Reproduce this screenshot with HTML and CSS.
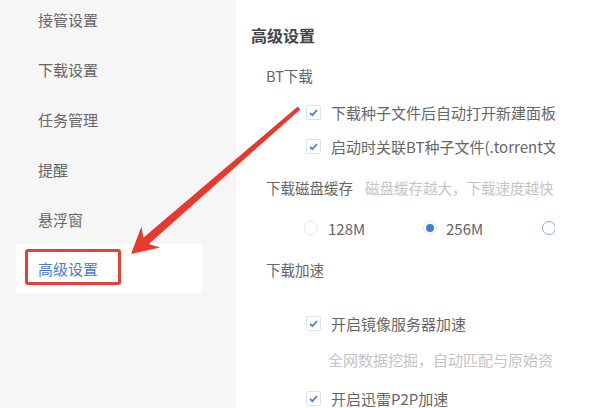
FILE: index.html
```html
<!DOCTYPE html>
<html>
<head>
	<meta charset="utf-8">
	<title>高级设置</title>
	<link rel="stylesheet" href="styles.css">
</head>
<body>
	<div class="window">
		<div class="side-menu">
			<div class="menu-item">接管设置</div>
			<div class="menu-item">下载设置</div>
			<div class="menu-item">任务管理</div>
			<div class="menu-item">提醒</div>
			<div class="menu-item">悬浮窗</div>
			<div class="menu-item active">高级设置<span class="mark-box"></span></div>
		</div>

		<div class="settings-main">
			<div class="settings-title">高级设置</div>

			<div class="group-label">BT下载</div>
			<div class="check-row mt9"><span class="check"><svg viewBox="0 0 13 13" width="13" height="13"><polyline points="3,6.8 5.4,9.2 10,4" /></svg></span>下载种子文件后自动打开新建面板</div>
			<div class="check-row"><span class="check"><svg viewBox="0 0 13 13" width="13" height="13"><polyline points="3,6.8 5.4,9.2 10,4" /></svg></span>启动时关联BT种子文件(.torrent文</div>

			<div class="group-label mt15">下载磁盘缓存<span class="hint-inline">磁盘缓存越大，下载速度越快</span></div>
			<div class="radio-row">
				<div class="radio-opt"><span class="radio"></span>128M</div>
				<div class="radio-opt"><span class="radio checked"></span>256M</div>
				<div class="radio-opt last"><span class="radio next"></span></div>
			</div>

			<div class="group-label mt17">下载加速</div>
			<div class="check-row mt26"><span class="check"><svg viewBox="0 0 13 13" width="13" height="13"><polyline points="3,6.8 5.4,9.2 10,4" /></svg></span>开启镜像服务器加速</div>
			<div class="hint-row">全网数据挖掘，自动匹配与原始资</div>
			<div class="check-row mt11"><span class="check"><svg viewBox="0 0 13 13" width="13" height="13"><polyline points="3,6.8 5.4,9.2 10,4" /></svg></span>开启迅雷P2P加速</div>
		</div>

		<div class="right-blank"></div>

		<svg class="pointer-arrow" width="612" height="408" viewBox="0 0 612 408">
			<polygon points="297.7,106.5 143.3,237.8 141.5,226.4 131,254 160.2,247.5 148.8,244.0 300.3,109.5" />
		</svg>
	</div>
</body>
</html>
```

FILE: styles.css
```css
body{
	margin: 0;
	font-family: "Noto Sans CJK SC", "Noto Sans", sans-serif;
}
.window{
	position: relative;
	display: flex;
	width: 612px;
	height: 408px;
	overflow: hidden;
	background-color: #fff;
}
.side-menu{
	width: 236px;
	flex-shrink: 0;
	background-color: #f6f6f6;
	padding-left: 16px;
	box-sizing: border-box;
}
.menu-item{
	position: relative;
	width: 186px;
	height: 50px;
	display: flex;
	align-items: center;
	padding-left: 22px;
	box-sizing: border-box;
	font-size: 15px;
	color: #666;
	border-radius: 4px;
}
.menu-item:first-child{
	margin-top: -6px;
}
.menu-item.active{
	background-color: #fff;
	color: #4a7ccc;
	height: 49px;
}
.mark-box{
	position: absolute;
	left: 9px;
	top: 5px;
	width: 96px;
	height: 36px;
	border: 3px solid #e0433a;
	border-radius: 3px;
	box-sizing: border-box;
}
.settings-main{
	width: 319px;
	flex-shrink: 0;
	overflow: hidden;
	padding: 23px 0 0 15px;
	box-sizing: border-box;
	white-space: nowrap;
	color: #666;
}
.right-blank{
	flex: 1;
}
.settings-title{
	height: 24px;
	line-height: 24px;
	font-size: 16px;
	font-weight: bold;
	color: #444;
}
.group-label{
	margin-top: 19px;
	padding-left: 15px;
	height: 20px;
	line-height: 20px;
	font-size: 14.5px;
	color: #666;
}
.hint-inline{
	margin-left: 12px;
	color: #c4c4c4;
	font-size: 14.5px;
}
.check-row{
	height: 34px;
	display: flex;
	align-items: center;
	padding-left: 55px;
	font-size: 15px;
	color: #666;
}
.check{
	width: 13px;
	height: 13px;
	border: 1px solid #e2e2e2;
	border-radius: 2px;
	background-color: #fff;
	margin-right: 10px;
	display: flex;
}
.check svg{
	fill: none;
	stroke: #4a7fd6;
	stroke-width: 1.8;
}
.radio-row{
	margin-top: 15px;
	height: 30px;
	display: flex;
	padding-left: 53px;
}
.radio-opt{
	width: 119px;
	display: flex;
	align-items: center;
	font-size: 15px;
	color: #666;
	flex-shrink: 0;
}
.radio-opt.last{
	width: auto;
}
.radio{
	width: 14px;
	height: 14px;
	border: 1px solid #e6e6e6;
	border-radius: 50%;
	box-sizing: border-box;
	margin-right: 10px;
	display: flex;
	align-items: center;
	justify-content: center;
}
.radio.checked{
	border-color: #e3e9f3;
	margin-right: 9px;
}
.radio.checked::after{
	content: "";
	width: 8px;
	height: 8px;
	border-radius: 50%;
	background-color: #3f7ee0;
}
.radio.next{
	border-color: #7fa6e4;
}
.hint-row{
	margin-top: 10px;
	padding-left: 77px;
	height: 20px;
	line-height: 20px;
	font-size: 15px;
	color: #c4c4c4;
}
.mt9{ margin-top: 9px; }
.mt15{ margin-top: 15px; }
.mt17{ margin-top: 17px; }
.mt26{ margin-top: 26px; }
.mt11{ margin-top: 11px; }
.pointer-arrow{
	position: absolute;
	left: 0;
	top: 0;
	pointer-events: none;
}
.pointer-arrow polygon{
	fill: #e8392e;
}
```
